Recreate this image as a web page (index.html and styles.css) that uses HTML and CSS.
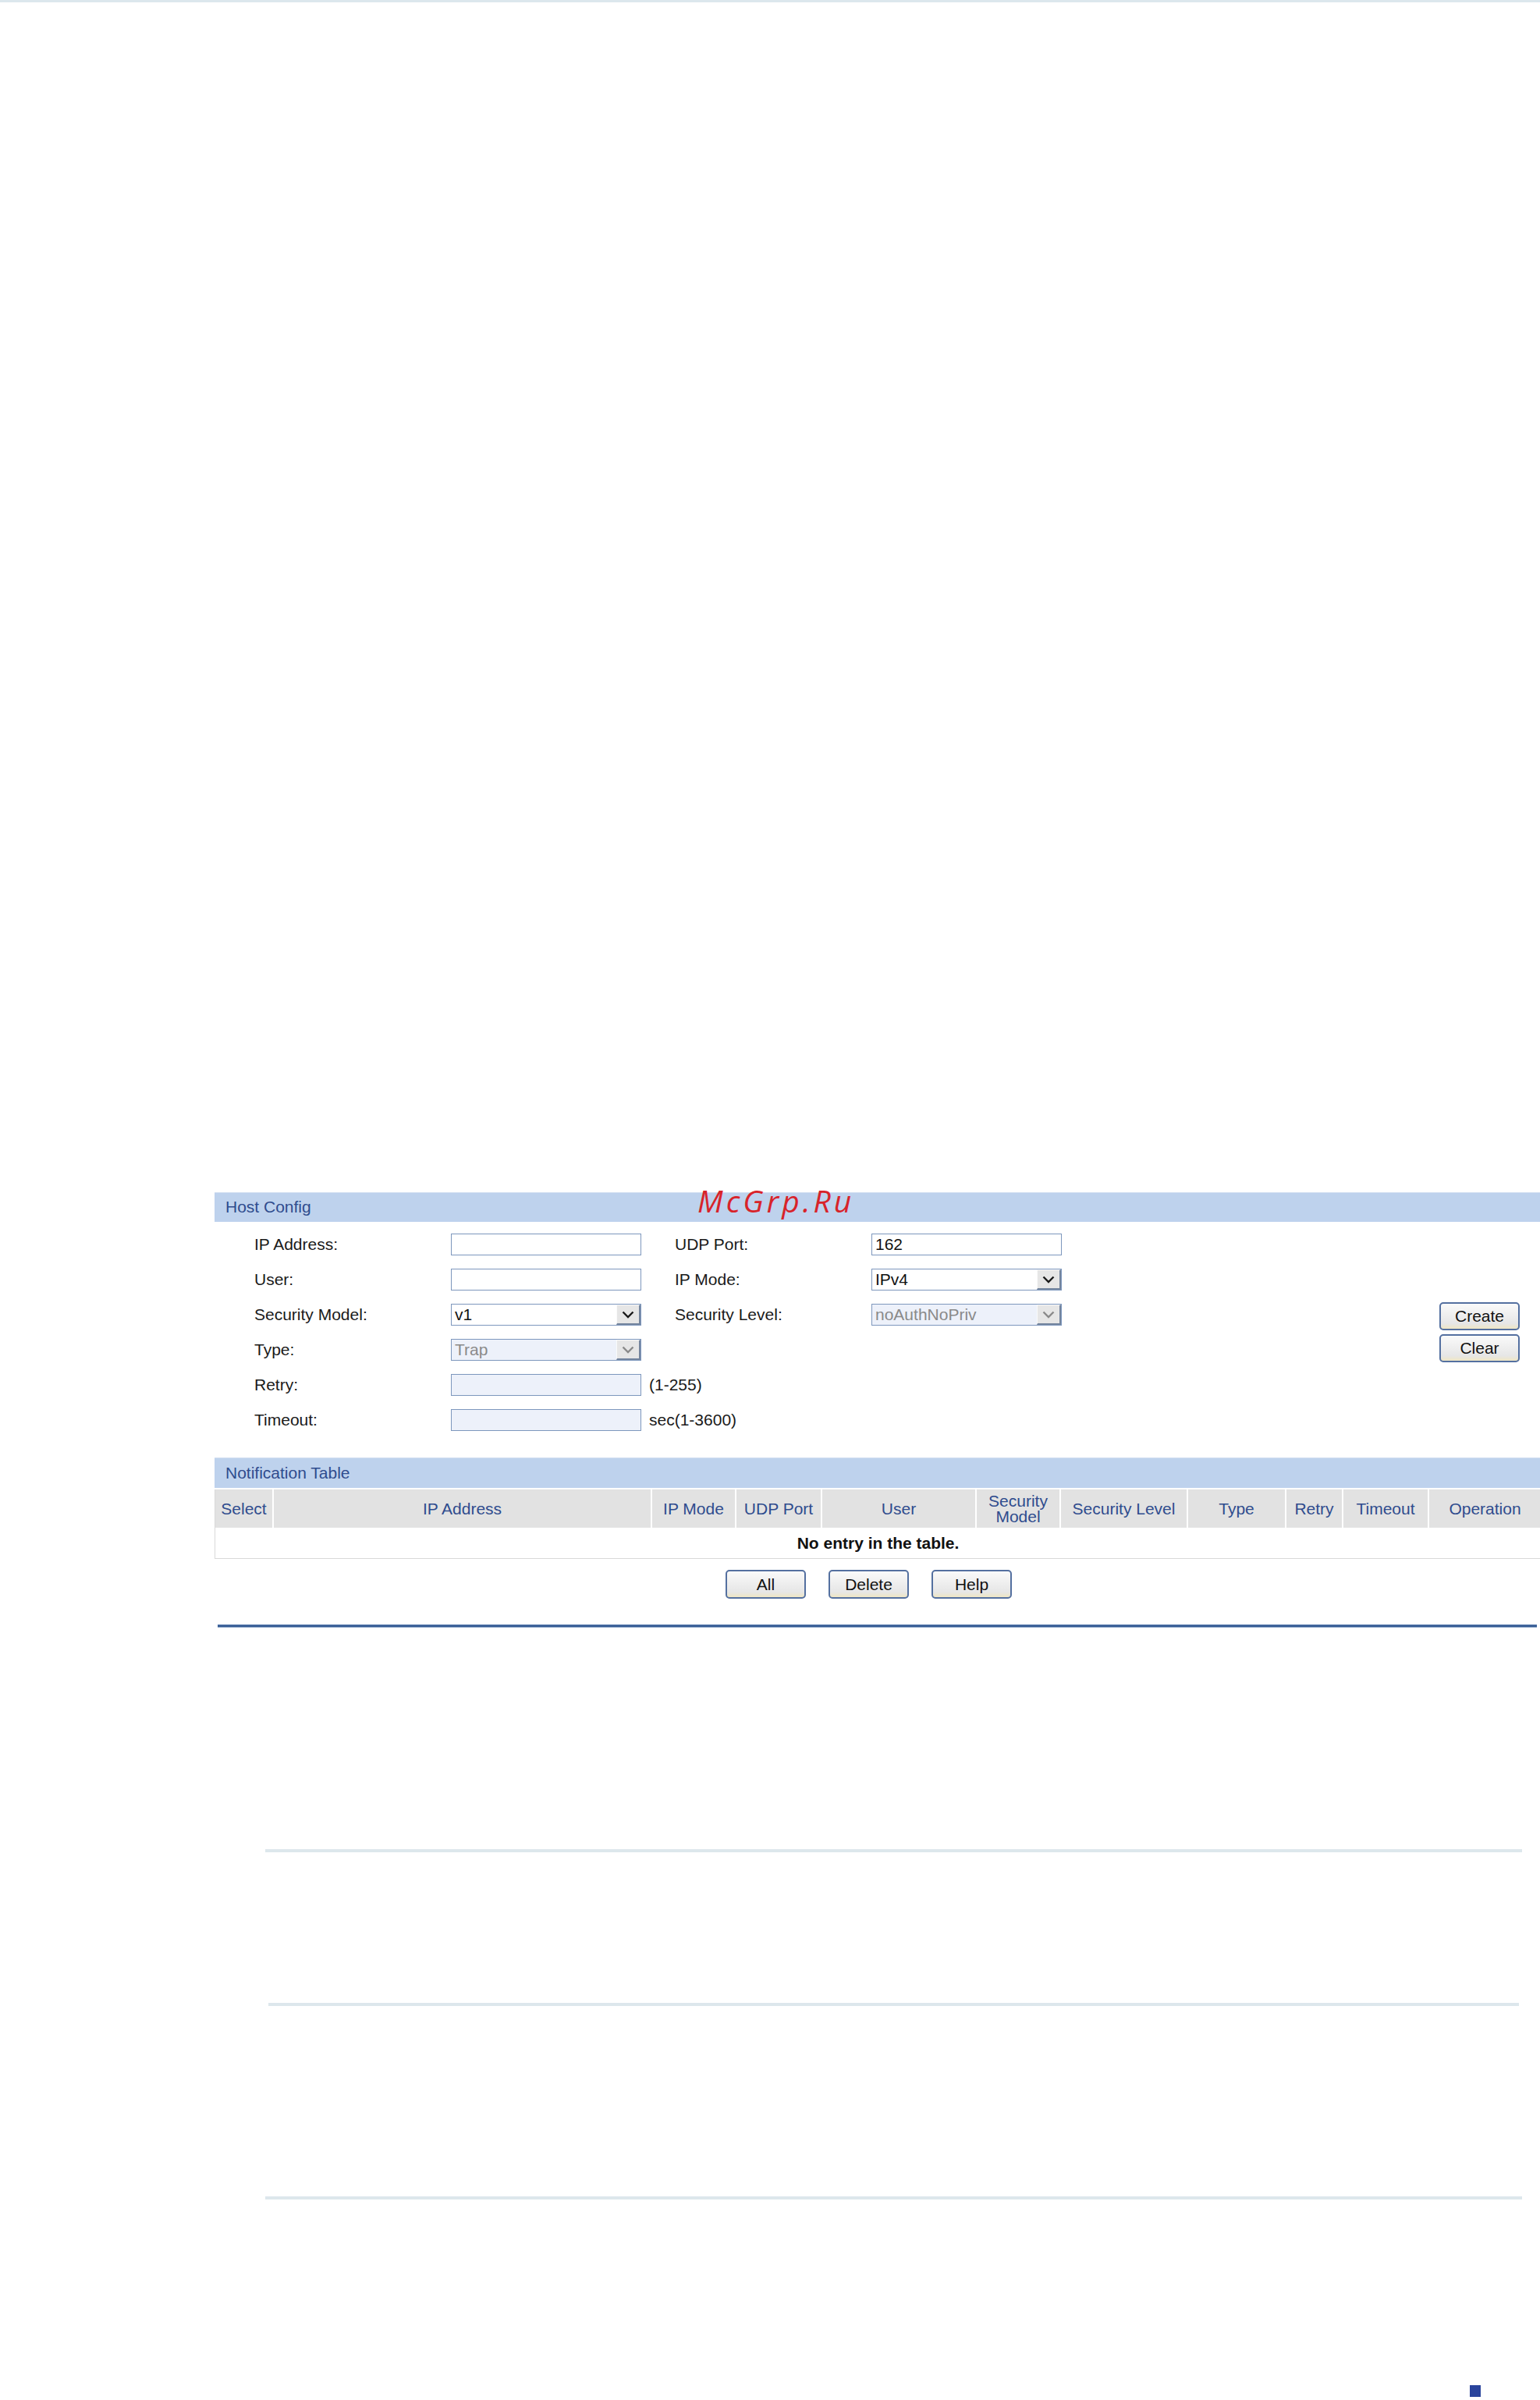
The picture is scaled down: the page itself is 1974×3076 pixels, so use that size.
FILE: index.html
```html
<!DOCTYPE html>
<html lang="en">
<head>
  <meta charset="UTF-8">
  <meta name="viewport" content="width=device-width, initial-scale=1">
  <title>SNMP Notification</title>
  <link rel="stylesheet" href="styles.css">
</head>
<body>
  <div class="topline"></div>

  <div class="page">
    <div class="panel">
      <span class="watermark">McGrp.Ru</span>

      <div class="bar">Host Config</div>
      <div class="form">
        <label>IP Address:</label>
        <input type="text" class="field">
        <label class="col2">UDP Port:</label>
        <input type="text" class="field" value="162">

        <label>User:</label>
        <input type="text" class="field">
        <label class="col2">IP Mode:</label>
        <div class="select">
          <span>IPv4</span>
          <span class="arrow"><svg viewBox="0 0 16 10"><path d="M1.5 1.5 L8 8 L14.5 1.5"/></svg></span>
        </div>

        <label>Security Model:</label>
        <div class="select">
          <span>v1</span>
          <span class="arrow"><svg viewBox="0 0 16 10"><path d="M1.5 1.5 L8 8 L14.5 1.5"/></svg></span>
        </div>
        <label class="col2">Security Level:</label>
        <div class="select disabled">
          <span>noAuthNoPriv</span>
          <span class="arrow"><svg viewBox="0 0 16 10"><path d="M1.5 1.5 L8 8 L14.5 1.5"/></svg></span>
        </div>

        <div class="side-buttons">
          <button class="btn">Create</button>
          <button class="btn">Clear</button>
        </div>

        <label>Type:</label>
        <div class="select disabled">
          <span>Trap</span>
          <span class="arrow"><svg viewBox="0 0 16 10"><path d="M1.5 1.5 L8 8 L14.5 1.5"/></svg></span>
        </div>

        <label>Retry:</label>
        <input type="text" class="field" disabled>
        <span class="hint">(1-255)</span>

        <label>Timeout:</label>
        <input type="text" class="field" disabled>
        <span class="hint">sec(1-3600)</span>
      </div>

      <div class="bar table-bar">Notification Table</div>
      <table class="notify">
        <thead>
          <tr>
            <th class="c-select">Select</th>
            <th class="c-ip">IP Address</th>
            <th class="c-mode">IP Mode</th>
            <th class="c-port">UDP Port</th>
            <th class="c-user">User</th>
            <th class="c-model">Security Model</th>
            <th class="c-level">Security Level</th>
            <th class="c-type">Type</th>
            <th class="c-retry">Retry</th>
            <th class="c-timeout">Timeout</th>
            <th class="c-op">Operation</th>
          </tr>
        </thead>
        <tbody>
          <tr>
            <td colspan="11" class="empty">No entry in the table.</td>
          </tr>
        </tbody>
      </table>

      <div class="table-buttons">
        <button class="btn">All</button>
        <button class="btn">Delete</button>
        <button class="btn">Help</button>
      </div>

      <div class="rule"></div>
    </div>

    <div class="notes">
      <div class="note-line"></div>
      <div class="note-line second"></div>
      <div class="note-line third"></div>
    </div>

    <div class="page-mark"></div>
  </div>
</body>
</html>
```

FILE: styles.css
```css
* {
  box-sizing: border-box;
}

body {
  margin: 0;
  background: #ffffff;
  font-family: "Liberation Sans", Arial, sans-serif;
  font-size: 21px;
  color: #1a1a1a;
}

.topline {
  height: 3px;
  background: #dce7ed;
}

.page {
  padding-top: 1525px;
}

.panel {
  position: relative;
  margin-left: 275px;
}

.watermark {
  position: absolute;
  left: 619px;
  top: -9px;
  font-family: "Open Sans", sans-serif;
  font-style: italic;
  font-size: 39px;
  line-height: 1;
  letter-spacing: 4px;
  color: #d8232a;
}

.bar {
  height: 38px;
  line-height: 36px;
  padding-left: 14px;
  background: #bed2ed;
  border-top: 1px solid #d3e0f2;
  color: #2f4c8e;
}

.table-bar {
  height: 39px;
  line-height: 37px;
}

/* host config form */
.form {
  display: grid;
  grid-template-columns: 252px 244px 43px 252px 244px 1fr 103px;
  grid-auto-rows: 28px;
  row-gap: 17px;
  align-items: center;
  padding: 15px 26px 34px 51px;
}

.form label {
  grid-column: 1;
}

.form label.col2 {
  grid-column: 4;
}

.field {
  height: 28px;
  width: 100%;
  border: 1px solid #7d97bd;
  padding: 0 4px;
  font: inherit;
  color: #111;
  background: #fff;
}

.field:disabled {
  background: #edf1fa;
}

.select {
  display: flex;
  align-items: center;
  justify-content: space-between;
  height: 28px;
  border: 1px solid #7d97bd;
  padding-left: 4px;
  background: #fff;
  color: #111;
}

.select.disabled {
  background: #edf1fa;
  color: #8a8a8a;
}

.arrow {
  display: flex;
  align-items: center;
  justify-content: center;
  width: 31px;
  height: 26px;
  background: #e6e6e6;
  border: 1px solid #fafafa;
  border-right: 2px solid #74859e;
  border-bottom: 2px solid #74859e;
}

.arrow svg {
  width: 16px;
  height: 10px;
  fill: none;
  stroke: #1a1a1a;
  stroke-width: 2.4;
}

.select.disabled .arrow svg {
  stroke: #8a8a8a;
}

.hint {
  grid-column: 3 / 5;
  padding-left: 10px;
}

.side-buttons {
  grid-column: 7;
  grid-row: 3 / span 2;
  display: flex;
  flex-direction: column;
  gap: 5px;
}

.btn {
  width: 103px;
  height: 36px;
  border: 2px solid #5470a0;
  border-radius: 5px;
  background: linear-gradient(#fafafa, #e6e6e6 80%, #efe6c4);
  font: inherit;
  color: #111;
  padding: 0;
}

/* notification table */
.notify {
  width: 1699px;
  margin-top: 2px;
  border-collapse: separate;
  border-spacing: 0;
  table-layout: fixed;
  border: 1px solid #d9d9d9;
  border-top: none;
}

.notify th {
  height: 49px;
  padding: 0 4px;
  background: #e2e2e2;
  border-right: 2px solid #fff;
  color: #2f4c8e;
  font-weight: normal;
  line-height: 20px;
  text-align: center;
}

.notify th:last-child {
  border-right: none;
}

.c-select { width: 75px; }
.c-ip { width: 485px; }
.c-mode { width: 108px; }
.c-port { width: 110px; }
.c-user { width: 198px; }
.c-model { width: 108px; }
.c-level { width: 163px; }
.c-type { width: 126px; }
.c-retry { width: 73px; }
.c-timeout { width: 110px; }
.c-op { width: 143px; }

.notify .empty {
  height: 39px;
  text-align: center;
  font-weight: bold;
  color: #111;
}

.table-buttons {
  display: flex;
  justify-content: center;
  gap: 29px;
  margin-top: 14px;
  padding-right: 22px;
}

.table-buttons .btn {
  height: 37px;
}

.rule {
  height: 4px;
  margin: 33px 4px 0 4px;
  background: linear-gradient(#7f9ec8, #365b93 35%, #365b93 65%, #9db6d6);
}

/* blank text area lines */
.notes {
  padding-left: 340px;
  padding-right: 23px;
}

.note-line {
  height: 4px;
  background: #dde7ec;
  margin-top: 284px;
}

.note-line.second {
  margin-top: 193px;
  margin-left: 4px;
  margin-right: 4px;
}

.note-line.third {
  margin-top: 244px;
}

.page-mark {
  width: 14px;
  height: 15px;
  margin: 238px 0 0 1884px;
  background: #2a449c;
}
```
